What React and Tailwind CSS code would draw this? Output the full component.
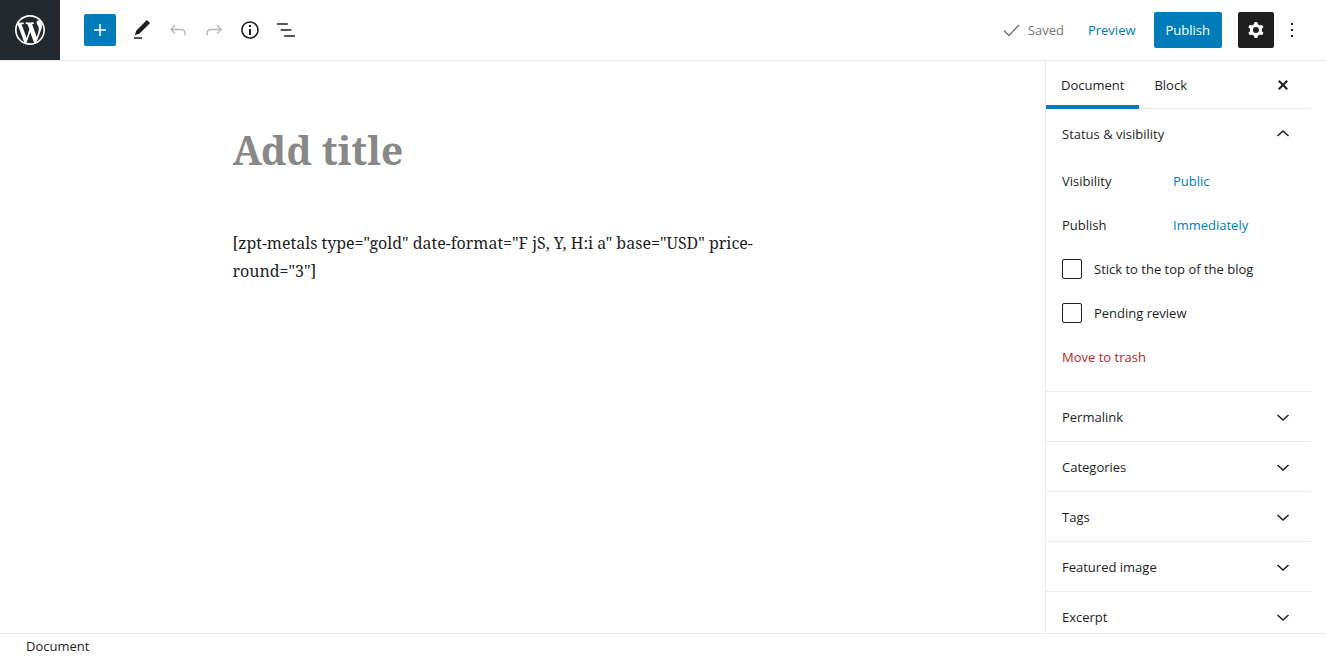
import React from "react";

const paths = {
  wordpress:
    "M20 10c0-5.51-4.49-10-10-10C4.48 0 0 4.49 0 10c0 5.52 4.48 10 10 10 5.51 0 10-4.48 10-10zM7.78 15.37L4.37 6.22c.55-.02 1.17-.08 1.17-.08.5-.06.44-1.13-.06-1.11 0 0-1.45.11-2.37.11-.18 0-.37 0-.58-.01C4.12 2.69 6.87 1.11 10 1.11c2.33 0 4.45.87 6.05 2.34-.68-.11-1.65.39-1.65 1.58 0 .74.45 1.36.9 2.1.35.61.55 1.36.55 2.46 0 1.49-1.4 5-1.4 5l-3.03-8.37c.54-.02.82-.17.82-.17.5-.05.44-1.25-.06-1.22 0 0-1.44.12-2.38.12-.87 0-2.33-.12-2.33-.12-.5-.03-.56 1.2-.06 1.22l.92.08 1.26 3.41zM17.41 10c.24-.64.74-1.87.43-4.25.7 1.29 1.05 2.71 1.05 4.25 0 3.29-1.73 6.24-4.4 7.78.97-2.59 1.94-5.2 2.92-7.78zM6.1 18.09C3.12 16.65 1.11 13.53 1.11 10c0-1.3.23-2.48.72-3.59C3.25 10.3 4.67 14.2 6.1 18.09zm4.03-6.63l2.58 6.98c-.86.29-1.76.45-2.71.45-.79 0-1.57-.11-2.29-.33.81-2.38 1.62-4.74 2.42-7.1z",
  plus: "M18 11.2h-5.2V6h-1.6v5.2H6v1.6h5.2V18h1.6v-5.2H18z",
  edit: "M20.1 5.1L16.9 2 6.2 12.7l-1.3 4.4 4.5-1.3L20.1 5.1zM4 20.8h8v-1.5H4v1.5z",
  undo: "M18.3 11.7c-.6-.6-1.4-.9-2.3-.9H6.7l2.9-3.3-1.1-1-4.5 5L8.5 16l1-1-2.7-2.7H16c.5 0 .9.2 1.3.5 1 1 1 3.4 1 4.5v.3h1.5v-.2c0-1.5 0-4.3-1.5-5.7z",
  redo: "M15.6 6.5l-1.1 1 2.9 3.3H8c-.9 0-1.7.3-2.3.9-1.4 1.5-1.4 4.2-1.4 5.6v.2h1.5v-.3c0-1.1 0-3.5 1-4.5.3-.3.7-.5 1.3-.5h9.2L14.5 15l1.1 1.1 4.6-4.6-4.6-5z",
  info: "M12 3.2c-4.8 0-8.8 3.9-8.8 8.8 0 4.8 3.9 8.8 8.8 8.8 4.8 0 8.8-3.9 8.8-8.8 0-4.8-4-8.8-8.8-8.8zm0 16c-4 0-7.2-3.3-7.2-7.2C4.8 8 8 4.8 12 4.8s7.2 3.3 7.2 7.2c0 4-3.2 7.2-7.2 7.2zM11 17h2v-6h-2v6zm0-8h2V7h-2v2z",
  list: "M13.8 5.2H3v1.5h10.8V5.2zm-3.6 12v1.5H21v-1.5H10.2zm7.2-6H6.6v1.5h10.8v-1.5z",
  check: "M9 18.6L3.5 13l1-1L9 16.4l9.5-9.9 1 1z",
  cog: "M10.289 4.836A1 1 0 0111.275 4h1.306a1 1 0 01.987.836l.244 1.466c.787.26 1.503.679 2.108 1.218l1.393-.522a1 1 0 011.216.437l.653 1.13a1 1 0 01-.23 1.273l-1.148.944a6.025 6.025 0 010 2.435l1.149.946a1 1 0 01.23 1.272l-.653 1.13a1 1 0 01-1.216.437l-1.394-.522c-.605.54-1.32.958-2.108 1.218l-.244 1.466a1 1 0 01-.987.836h-1.306a1 1 0 01-.986-.836l-.244-1.466a5.995 5.995 0 01-2.108-1.218l-1.394.522a1 1 0 01-1.217-.436l-.653-1.131a1 1 0 01.23-1.272l1.149-.946a6.026 6.026 0 010-2.435l-1.148-.944a1 1 0 01-.23-1.272l.653-1.131a1 1 0 011.217-.437l1.393.522a5.994 5.994 0 012.108-1.218l.244-1.466zM14.929 12a3 3 0 11-6 0 3 3 0 016 0z",
  more: "M13 19h-2v-2h2v2zm0-6h-2v-2h2v2zm0-6h-2V5h2v2z",
  close:
    "M16.95 8.46L13.41 12l3.54 3.54-1.41 1.41L12 13.42l-3.53 3.53-1.42-1.42L10.58 12 7.05 8.47l1.42-1.42L12 10.58l3.54-3.53z",
  up: "M12 8l-6 5.4 1 1.2 5-4.6 5 4.6 1-1.2z",
  down: "M17 9.4L12 14 7 9.4l-1 1.2 6 5.4 6-5.4z",
};

function Icon({ name, className = "size-6", viewBox = "0 0 24 24" }) {
  return (
    <svg viewBox={viewBox} className={`shrink-0 ${className}`} fill="currentColor" aria-hidden="true">
      <path d={paths[name]} fillRule="evenodd" clipRule="evenodd" />
    </svg>
  );
}

function IconButton({ icon, label, disabled, className = "size-9" }) {
  return (
    <button
      type="button"
      aria-label={label}
      disabled={disabled}
      className={`flex shrink-0 items-center justify-center rounded-xs disabled:opacity-30 ${className}`}
    >
      <Icon name={icon} />
    </button>
  );
}

function TopBar() {
  return (
    <header className="flex shrink-0 items-center border-b border-[#ebebeb] pr-4">
      <a
        href="#posts"
        aria-label="View posts"
        className="flex size-[60px] items-center justify-center bg-[#23282e] text-white"
      >
        <Icon name="wordpress" viewBox="-2 -2 24 24" className="size-9" />
      </a>
      <div className="ml-6 flex items-center">
        <IconButton icon="plus" label="Add block" className="mr-2 size-8 bg-[#007cba] text-white" />
        <IconButton icon="edit" label="Tools" />
        <IconButton icon="undo" label="Undo" disabled />
        <IconButton icon="redo" label="Redo" disabled />
        <IconButton icon="info" label="Content structure" />
        <IconButton icon="list" label="Block navigation" />
      </div>
      <div className="ml-auto flex items-center">
        <span className="mr-3 flex items-center gap-1 text-[#757575]">
          <Icon name="check" />
          Saved
        </span>
        <button type="button" className="mr-[6px] h-9 px-3 text-[#007cba]">
          Preview
        </button>
        <button type="button" className="mr-4 h-9 rounded-xs bg-[#007cba] px-3 text-white">
          Publish
        </button>
        <IconButton icon="cog" label="Settings" className="size-9 bg-[#1e1e1e] text-white" />
        <IconButton icon="more" label="Options" />
      </div>
    </header>
  );
}

function Row({ children }) {
  return <div className="flex h-11 items-center">{children}</div>;
}

function CheckRow({ id, label }) {
  return (
    <Row>
      <input
        id={id}
        type="checkbox"
        className="mr-3 size-5 appearance-none rounded-xs border border-[#1e1e1e] bg-white checked:bg-[#007cba]"
      />
      <label htmlFor={id}>{label}</label>
    </Row>
  );
}

function PanelHeader({ title, open }) {
  return (
    <button
      type="button"
      aria-expanded={!!open}
      className="flex h-[49px] w-full items-center justify-between px-4 text-left font-medium"
    >
      {title}
      <Icon name={open ? "up" : "down"} />
    </button>
  );
}

function Sidebar() {
  return (
    <aside className="flex w-[281px] shrink-0 flex-col overflow-hidden border-l border-[#ebebeb] pr-[15px]">
      <div className="flex h-12 shrink-0 items-stretch border-b border-[#ebebeb] font-medium">
        <button type="button" className="-mb-px border-b-4 border-[#007cba] px-[15px] pt-1">
          Document
        </button>
        <button type="button" className="px-[15px]">
          Block
        </button>
        <IconButton icon="close" label="Close settings" className="mr-4 ml-auto" />
      </div>
      <section>
        <PanelHeader title="Status & visibility" open />
        <div className="px-4 pt-px pb-3">
          <Row>
            <span className="w-[111px]">Visibility</span>
            <button type="button" className="text-[#007cba]">
              Public
            </button>
          </Row>
          <Row>
            <span className="w-[111px]">Publish</span>
            <button type="button" className="text-[#007cba]">
              Immediately
            </button>
          </Row>
          <CheckRow id="sticky" label="Stick to the top of the blog" />
          <CheckRow id="pending" label="Pending review" />
          <Row>
            <button type="button" className="text-[#b52727]">
              Move to trash
            </button>
          </Row>
        </div>
      </section>
      {["Permalink", "Categories", "Tags", "Featured image", "Excerpt"].map((title) => (
        <section key={title} className="border-t border-[#ebebeb]">
          <PanelHeader title={title} />
        </section>
      ))}
    </aside>
  );
}

export default function App() {
  return (
    <div className="flex h-screen flex-col bg-white font-['Open_Sans',sans-serif] text-[13px] leading-5 text-[#1e1e1e]">
      <TopBar />
      <div className="flex min-h-0 flex-1">
        <main className="min-w-0 flex-1 overflow-hidden px-6 pt-[61px] font-['Noto_Serif','Liberation_Serif',serif]">
          <div className="mx-auto max-w-[580px]">
            <input
              type="text"
              aria-label="Title"
              placeholder="Add title"
              className="block h-14 w-full text-[39px] leading-[56px] font-bold outline-none placeholder:text-[#888888]"
            />
            <p className="mt-[51px] text-base leading-7">
              [zpt-metals type="gold" date-format="F jS, Y, H:i a" base="USD" price-round="3"]
            </p>
          </div>
        </main>
        <Sidebar />
      </div>
      <footer className="flex h-[25px] shrink-0 items-center border-t border-[#ebebeb] px-[26px]">Document</footer>
    </div>
  );
}
